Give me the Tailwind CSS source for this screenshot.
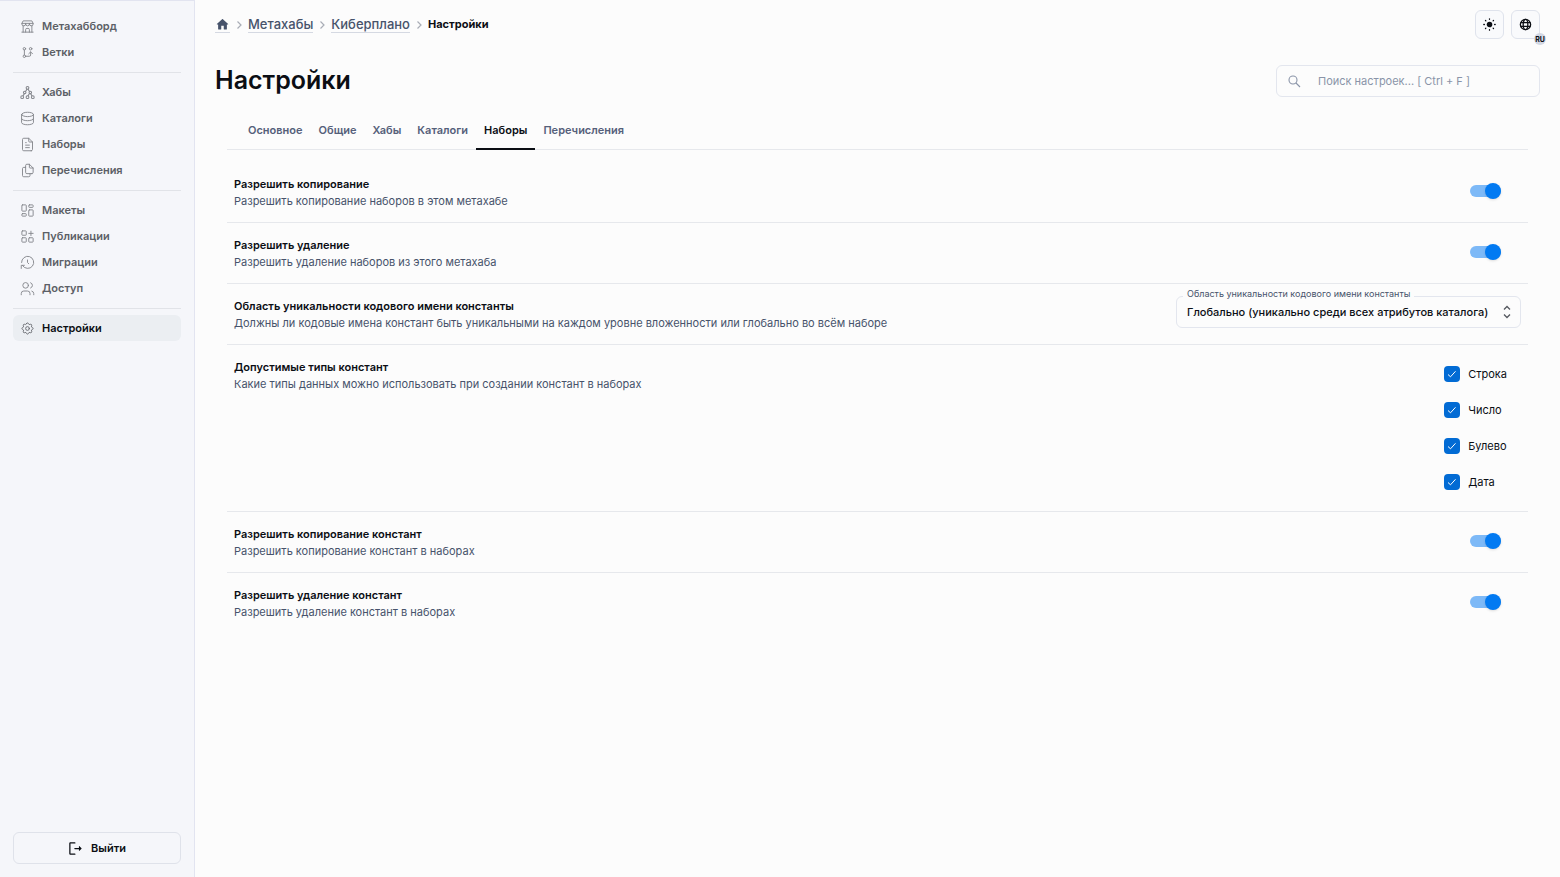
<!DOCTYPE html>
<html lang="ru">
<head>
    <meta charset="UTF-8">
    <meta name="viewport" content="width=device-width, initial-scale=1.0">
    <title>Настройки</title>
    <script src="https://cdn.jsdelivr.net/npm/@tailwindcss/browser@4"></script>
</head>
<body class="flex min-h-screen bg-[#fcfcfc] font-['Inter',sans-serif] text-[11px] leading-[17px] text-[#0b0e14]">

    <!-- Боковое меню -->
    <aside class="flex w-[195px] shrink-0 flex-col justify-between border-t border-r border-[#e2e4f0] bg-[#f5f6fa] px-[13px] pt-3 pb-[13px]">
        <nav class="font-semibold text-[#5c5f66]">
            <a href="#" class="flex h-[26px] items-center gap-[7px] px-[7px]">
                <svg class="size-[15px] text-[#85878d]" viewBox="0 0 24 24" fill="none" stroke="currentColor" stroke-width="1.5" stroke-linecap="round" stroke-linejoin="round"><path d="M3 21h18M3 7v1a3 3 0 0 0 6 0v-1m0 1a3 3 0 0 0 6 0v-1m0 1a3 3 0 0 0 6 0v-1h-18l2 -4h14l2 4M5 21v-10.15M19 21v-10.15M9 21v-4a2 2 0 0 1 2 -2h2a2 2 0 0 1 2 2v4"/></svg>
                Метахабборд
            </a>
            <a href="#" class="flex h-[26px] items-center gap-[7px] px-[7px]">
                <svg class="size-[15px] text-[#85878d]" viewBox="0 0 24 24" fill="none" stroke="currentColor" stroke-width="1.5" stroke-linecap="round" stroke-linejoin="round"><circle cx="7" cy="18" r="2"/><circle cx="7" cy="6" r="2"/><circle cx="17" cy="6" r="2"/><path d="M7 8v8M9 18h6a2 2 0 0 0 2 -2v-5M14 14l3 -3l3 3"/></svg>
                Ветки
            </a>
            <hr class="mt-[7px] mb-[6px] border-[#e1e3e8]">
            <a href="#" class="flex h-[26px] items-center gap-[7px] px-[7px]">
                <svg class="size-[15px] text-[#85878d]" viewBox="0 0 24 24" fill="none" stroke="currentColor" stroke-width="1.7" stroke-linecap="round" stroke-linejoin="round"><circle cx="12" cy="4.500" r="2.200"/><circle cx="7.500" cy="12" r="2"/><circle cx="16.500" cy="12" r="2"/><circle cx="3.500" cy="19.500" r="2.200"/><circle cx="12" cy="19.500" r="2.200"/><circle cx="20.500" cy="19.500" r="2.200"/><path d="M5 17l2 -3M9 10l2 -3M13 7l2 3M17 14l2 3M15 14l-2 3"/></svg>
                Хабы
            </a>
            <a href="#" class="flex h-[26px] items-center gap-[7px] px-[7px]">
                <svg class="size-[15px] text-[#85878d]" viewBox="0 0 24 24" fill="none" stroke="currentColor" stroke-width="1.5" stroke-linecap="round" stroke-linejoin="round"><path d="M2.500 5.500a9.500 3.500 0 1 0 19 0a9.500 3.500 0 1 0 -19 0M2.500 5.500v6.500a9.500 3.500 0 0 0 19 0v-6.500M2.500 12v6.500a9.500 3.500 0 0 0 19 0v-6.500"/></svg>
                Каталоги
            </a>
            <a href="#" class="flex h-[26px] items-center gap-[7px] px-[7px]">
                <svg class="size-[15px] text-[#85878d]" viewBox="0 0 24 24" fill="none" stroke="currentColor" stroke-width="1.5" stroke-linecap="round" stroke-linejoin="round"><path d="M14 2v5a1 1 0 0 0 1 1h5M18 22h-12a2 2 0 0 1 -2 -2v-16a2 2 0 0 1 2 -2h8l6 6v12a2 2 0 0 1 -2 2zM9 9h1M9 13h6M9 17h6"/></svg>
                Наборы
            </a>
            <a href="#" class="flex h-[26px] items-center gap-[7px] px-[7px]">
                <svg class="size-[15px] text-[#85878d]" viewBox="0 0 24 24" fill="none" stroke="currentColor" stroke-width="1.5" stroke-linecap="round" stroke-linejoin="round"><path d="M15 2v5a1 1 0 0 0 1 1h5M19 17h-8a2 2 0 0 1 -2 -2v-11a2 2 0 0 1 2 -2h4l6 6v7a2 2 0 0 1 -2 2zM16 17v3a2 2 0 0 1 -2 2h-8a2 2 0 0 1 -2 -2v-11a2 2 0 0 1 2 -2h3"/></svg>
                Перечисления
            </a>
            <hr class="mt-[7px] mb-[6px] border-[#e1e3e8]">
            <a href="#" class="flex h-[26px] items-center gap-[7px] px-[7px]">
                <svg class="size-[15px] text-[#85878d]" viewBox="0 0 24 24" fill="none" stroke="currentColor" stroke-width="1.5" stroke-linecap="round" stroke-linejoin="round"><rect x="3" y="3" width="7" height="10" rx="1"/><rect x="3" y="17" width="7" height="4" rx="1"/><rect x="14" y="11" width="7" height="10" rx="1"/><rect x="14" y="3" width="7" height="4" rx="1"/></svg>
                Макеты
            </a>
            <a href="#" class="flex h-[26px] items-center gap-[7px] px-[7px]">
                <svg class="size-[15px] text-[#85878d]" viewBox="0 0 24 24" fill="none" stroke="currentColor" stroke-width="1.5" stroke-linecap="round" stroke-linejoin="round"><rect x="3" y="3" width="7" height="7" rx="1"/><rect x="3" y="14" width="7" height="7" rx="1"/><rect x="14" y="14" width="7" height="7" rx="1"/><path d="M14 7h7M17.500 3.500v7"/></svg>
                Публикации
            </a>
            <a href="#" class="flex h-[26px] items-center gap-[7px] px-[7px]">
                <svg class="size-[15px] text-[#85878d]" viewBox="0 0 24 24" fill="none" stroke="currentColor" stroke-width="1.5" stroke-linecap="round" stroke-linejoin="round"><path d="M12 8v4l2 2M2.500 12a9.700 9.700 0 1 1 1.500 5m-2 4.500v-5h5"/></svg>
                Миграции
            </a>
            <a href="#" class="flex h-[26px] items-center gap-[7px] px-[7px]">
                <svg class="size-[15px] text-[#85878d]" viewBox="0 0 24 24" fill="none" stroke="currentColor" stroke-width="1.5" stroke-linecap="round" stroke-linejoin="round"><circle cx="9" cy="7" r="4.500"/><path d="M2 22v-2a4 4 0 0 1 4 -4h6a4 4 0 0 1 4 4v2M17 2.800a4.500 4.500 0 0 1 0 8.400M22 22v-2a4 4 0 0 0 -3 -3.850"/></svg>
                Доступ
            </a>
            <hr class="mt-[7px] mb-[6px] border-[#e1e3e8]">
            <a href="#" class="flex h-[26px] items-center gap-[7px] rounded-md bg-[#ebeef2] px-[7px] text-[#0b0e14]">
                <svg class="size-[15px] text-[#6b6d73]" viewBox="0 0 24 24" fill="none" stroke="currentColor" stroke-width="1.5" stroke-linecap="round" stroke-linejoin="round"><path d="M10.325 4.317c.426 -1.756 2.924 -1.756 3.35 0a1.724 1.724 0 0 0 2.573 1.066c1.543 -.94 3.31 .826 2.37 2.37a1.724 1.724 0 0 0 1.065 2.572c1.756 .426 1.756 2.924 0 3.35a1.724 1.724 0 0 0 -1.066 2.573c.94 1.543 -.826 3.31 -2.37 2.37a1.724 1.724 0 0 0 -2.572 1.065c-.426 1.756 -2.924 1.756 -3.35 0a1.724 1.724 0 0 0 -2.573 -1.066c-1.543 .94 -3.31 -.826 -2.37 -2.37a1.724 1.724 0 0 0 -1.065 -2.572c-1.756 -.426 -1.756 -2.924 0 -3.35a1.724 1.724 0 0 0 1.066 -2.573c-.94 -1.543 .826 -3.31 2.37 -2.37c1 .608 2.296 .07 2.572 -1.065z"/><circle cx="12" cy="12" r="3"/></svg>
                Настройки
            </a>
        </nav>
        <button class="flex h-8 items-center justify-center gap-2 rounded-md border border-[#dfe2ea] font-semibold">
            <svg class="size-[15px]" viewBox="0 0 24 24" fill="currentColor"><path d="M5 4h6c.55 0 1-.45 1-1s-.45-1-1-1H4c-1.100 0-2 .9-2 2v16c0 1.100.9 2 2 2h7c.55 0 1-.45 1-1s-.45-1-1-1H4V4z"/><path d="m21.650 11.650-3.300-3.300c-.32-.32-.86-.1-.86.35V11h-6.500c-.55 0-1 .45-1 1s.45 1 1 1h6.500v2.300c0 .45.54.67.85.35l3.300-3.300c.2-.19.2-.51.01-.7z"/></svg>
            Выйти
        </button>
    </aside>

    <main class="min-w-0 flex-1 px-5 pt-[10px]">
        <!-- Хлебные крошки и кнопки -->
        <header class="flex h-[29px] items-center justify-between">
            <nav class="flex items-center gap-1 text-[13px] font-medium text-[#47536b]" aria-label="Хлебные крошки">
                <a href="#" class="border-b border-[#d5d9e2]" aria-label="Главная"><svg class="size-[15px]" viewBox="0 0 24 24" fill="currentColor"><path d="M10 19v-5h4v5c0 .55.45 1 1 1h3c.55 0 1-.45 1-1v-7h1.7c.46 0 .68-.57.33-.87L12.67 3.6c-.38-.34-.96-.34-1.34 0l-8.36 7.53c-.34.3-.13.87.33.87H5v7c0 .55.45 1 1 1h3c.55 0 1-.45 1-1z"/></svg></a>
                <svg class="size-[10px] text-[#a9adb6]" viewBox="0 0 10 10" fill="none" stroke="currentColor" stroke-width="1.200"><path d="M3.500 1.500l3.500 3.500l-3.500 3.500"/></svg>
                <a href="#" class="border-b border-[#d5d9e2] leading-4">Метахабы</a>
                <svg class="size-[10px] text-[#a9adb6]" viewBox="0 0 10 10" fill="none" stroke="currentColor" stroke-width="1.200"><path d="M3.500 1.500l3.500 3.500l-3.500 3.500"/></svg>
                <a href="#" class="border-b border-[#d5d9e2] leading-4">Киберплано</a>
                <svg class="size-[10px] text-[#a9adb6]" viewBox="0 0 10 10" fill="none" stroke="currentColor" stroke-width="1.200"><path d="M3.500 1.500l3.500 3.500l-3.500 3.500"/></svg>
                <span class="text-[11px] font-bold text-[#0b0e14]">Настройки</span>
            </nav>
            <div class="flex gap-[7px]">
                <button class="flex size-[29px] items-center justify-center rounded-md border border-[#dfe3ec] bg-[#f9fafc]" aria-label="Тема">
                    <svg class="size-[13px]" viewBox="0 0 24 24" stroke="currentColor" stroke-width="2.400" stroke-linecap="round"><circle cx="12" cy="12" r="4" fill="currentColor"/><path d="M12 1.500v1M12 21.500v1M1.500 12h1M21.500 12h1M4.600 4.600l.7 .7M18.700 18.700l.7 .7M4.600 19.400l.7 -.7M18.700 5.300l.7 -.7"/></svg>
                </button>
                <button class="relative flex size-[29px] items-center justify-center rounded-md border border-[#dfe3ec] bg-[#f9fafc]" aria-label="Язык">
                    <svg class="size-[13px]" viewBox="0 0 24 24" fill="none" stroke="currentColor" stroke-width="2.400"><circle cx="12" cy="12" r="9.500"/><ellipse cx="12" cy="12" rx="4.300" ry="9.500"/><path d="M3 8.700h18M3 15.300h18"/></svg>
                    <span class="absolute -right-[7px] -bottom-[7px] flex size-3 items-center justify-center rounded-full bg-[#d3d8e4] text-[7px] font-bold">RU</span>
                </button>
            </div>
        </header>

        <div class="mt-[26px] flex items-center justify-between">
            <h1 class="pb-[2px] text-[25px] leading-[30px] font-semibold">Настройки</h1>
            <label class="flex h-8 w-[264px] items-center gap-[17px] rounded-md border border-[#e3e6ee] px-[11px]">
                <svg class="size-[13px] shrink-0 text-[#8a94a8]" viewBox="0 0 13 13" fill="none" stroke="currentColor" stroke-width="1.100"><circle cx="5" cy="5" r="4"/><path d="M8 8l4 4"/></svg>
                <input type="text" class="w-full outline-none placeholder:text-[#8a94a8]" placeholder="Поиск настроек... [ Ctrl + F ]" aria-label="Поиск настроек">
            </label>
        </div>

        <div class="px-3">
            <div class="mt-[13px] flex h-10 border-b border-[#e6e8ec] px-[13px] font-semibold text-[#55607a]" role="tablist">
                <button class="-mb-px border-b-2 border-transparent px-2 pt-[2px]" role="tab">Основное</button>
                <button class="-mb-px border-b-2 border-transparent px-2 pt-[2px]" role="tab">Общие</button>
                <button class="-mb-px border-b-2 border-transparent px-2 pt-[2px]" role="tab">Хабы</button>
                <button class="-mb-px border-b-2 border-transparent px-2 pt-[2px]" role="tab">Каталоги</button>
                <button class="-mb-px border-b-2 border-[#0b0e14] px-2 pt-[2px] text-[#0b0e14]" role="tab" aria-selected="true">Наборы</button>
                <button class="-mb-px border-b-2 border-transparent px-2 pt-[2px]" role="tab">Перечисления</button>
            </div>

            <section class="mt-3 divide-y divide-[#e6e8ec]">
                <div class="flex items-center justify-between px-[7px] pt-[14px] pb-3">
                    <label for="allow-copy">
                        <span class="block font-semibold">Разрешить копирование</span>
                        <span class="block text-[#47536b]">Разрешить копирование наборов в этом метахабе</span>
                    </label>
                    <span class="mr-5 mb-1 flex h-3 w-[31px] items-center justify-end rounded-full bg-[#7db9f7]">
                        <input id="allow-copy" type="checkbox" role="switch" checked class="size-4 appearance-none rounded-full bg-[#027af2] shadow-sm">
                    </span>
                </div>
                <div class="flex items-center justify-between px-[7px] pt-[14px] pb-3">
                    <label for="allow-delete">
                        <span class="block font-semibold">Разрешить удаление</span>
                        <span class="block text-[#47536b]">Разрешить удаление наборов из этого метахаба</span>
                    </label>
                    <span class="mr-5 mb-1 flex h-3 w-[31px] items-center justify-end rounded-full bg-[#7db9f7]">
                        <input id="allow-delete" type="checkbox" role="switch" checked class="size-4 appearance-none rounded-full bg-[#027af2] shadow-sm">
                    </span>
                </div>
                <div class="flex items-center justify-between px-[7px] pt-[14px] pb-3">
                    <div>
                        <p class="font-semibold">Область уникальности кодового имени константы</p>
                        <p class="text-[#47536b]">Должны ли кодовые имена констант быть уникальными на каждом уровне вложенности или глобально во всём наборе</p>
                    </div>
                    <div class="relative -mt-[2px] mb-1">
                        <label for="scope" class="absolute -top-[11px] left-[7px] bg-[#fcfcfc] px-1 text-[9px] text-[#47536b]">Область уникальности кодового имени константы</label>
                        <select id="scope" class="block h-8 w-[345px] appearance-none rounded-md border border-[#e3e6ee] pl-[10px] font-medium">
                            <option>Глобально (уникально среди всех атрибутов каталога)</option>
                        </select>
                        <svg class="pointer-events-none absolute top-[9px] right-[7px] size-[14px] text-[#55585f]" viewBox="0 0 14 14" fill="none" stroke="currentColor" stroke-width="1.300"><path d="M4 4.500l3 -3l3 3M4 9.500l3 3l3 -3"/></svg>
                    </div>
                </div>
                <div class="flex justify-between px-[7px]">
                    <div class="pt-[14px] pb-3">
                        <p class="font-semibold">Допустимые типы констант</p>
                        <p class="text-[#47536b]">Какие типы данных можно использовать при создании констант в наборах</p>
                    </div>
                    <div class="mr-[14px] flex flex-col gap-4 py-[19px]">
                        <label class="relative flex h-5 items-center gap-2">
                            <input type="checkbox" checked class="size-4 appearance-none rounded bg-[#026bd4]">
                            <svg class="absolute left-1 size-2 text-white" viewBox="0 0 8 8" fill="none" stroke="currentColor"><path d="M0 4.500l2.500 2.300l5 -5.500"/></svg>
                            Строка
                        </label>
                        <label class="relative flex h-5 items-center gap-2">
                            <input type="checkbox" checked class="size-4 appearance-none rounded bg-[#026bd4]">
                            <svg class="absolute left-1 size-2 text-white" viewBox="0 0 8 8" fill="none" stroke="currentColor"><path d="M0 4.500l2.500 2.300l5 -5.500"/></svg>
                            Число
                        </label>
                        <label class="relative flex h-5 items-center gap-2">
                            <input type="checkbox" checked class="size-4 appearance-none rounded bg-[#026bd4]">
                            <svg class="absolute left-1 size-2 text-white" viewBox="0 0 8 8" fill="none" stroke="currentColor"><path d="M0 4.500l2.500 2.300l5 -5.500"/></svg>
                            Булево
                        </label>
                        <label class="relative flex h-5 items-center gap-2">
                            <input type="checkbox" checked class="size-4 appearance-none rounded bg-[#026bd4]">
                            <svg class="absolute left-1 size-2 text-white" viewBox="0 0 8 8" fill="none" stroke="currentColor"><path d="M0 4.500l2.500 2.300l5 -5.500"/></svg>
                            Дата
                        </label>
                    </div>
                </div>
                <div class="flex items-center justify-between px-[7px] pt-[14px] pb-3">
                    <label for="const-copy">
                        <span class="block font-semibold">Разрешить копирование констант</span>
                        <span class="block text-[#47536b]">Разрешить копирование констант в наборах</span>
                    </label>
                    <span class="mr-5 mb-1 flex h-3 w-[31px] items-center justify-end rounded-full bg-[#7db9f7]">
                        <input id="const-copy" type="checkbox" role="switch" checked class="size-4 appearance-none rounded-full bg-[#027af2] shadow-sm">
                    </span>
                </div>
                <div class="flex items-center justify-between px-[7px] pt-[14px] pb-3">
                    <label for="const-delete">
                        <span class="block font-semibold">Разрешить удаление констант</span>
                        <span class="block text-[#47536b]">Разрешить удаление констант в наборах</span>
                    </label>
                    <span class="mr-5 mb-1 flex h-3 w-[31px] items-center justify-end rounded-full bg-[#7db9f7]">
                        <input id="const-delete" type="checkbox" role="switch" checked class="size-4 appearance-none rounded-full bg-[#027af2] shadow-sm">
                    </span>
                </div>
            </section>
        </div>
    </main>
</body>
</html>
